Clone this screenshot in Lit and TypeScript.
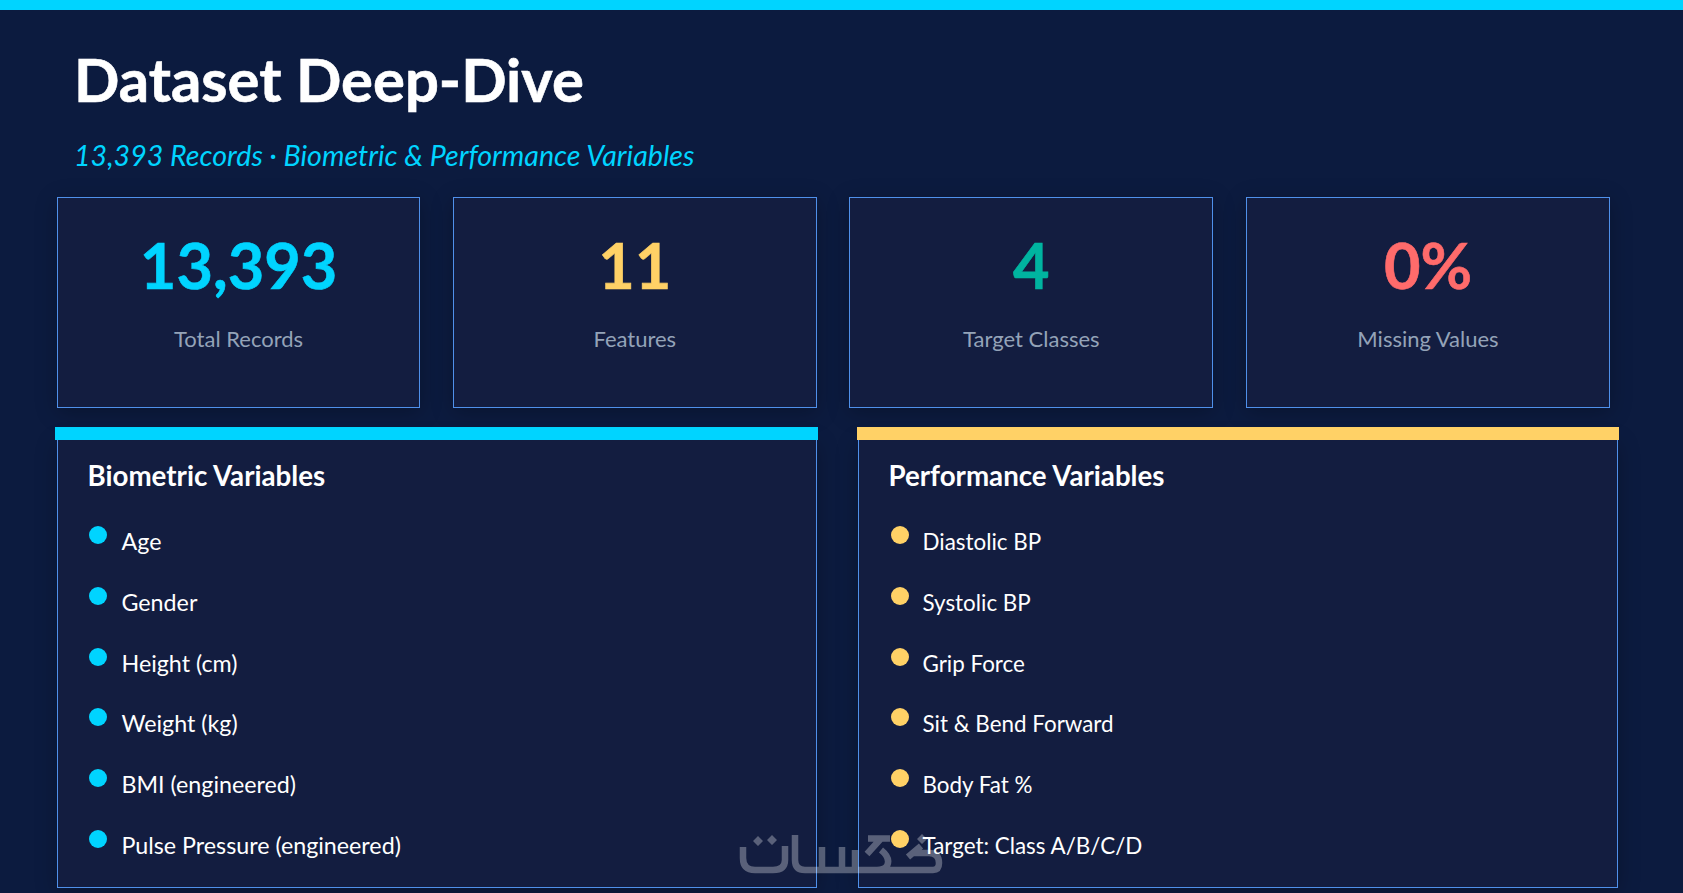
import { LitElement, html, css } from "lit";
import { customElement } from "lit/decorators.js";

const stats = [
  { v: "13,393", l: "Total Records", c: "#00d4ff" },
  { v: "11", l: "Features", c: "#ffd166" },
  { v: "4", l: "Target Classes", c: "#00b4a0" },
  { v: "0%", l: "Missing Values", c: "#ff6b6b" },
];
const panels = [
  { t: "Biometric Variables", c: "#00d4ff", items: ["Age", "Gender", "Height (cm)", "Weight (kg)", "BMI (engineered)", "Pulse Pressure (engineered)"] },
  { t: "Performance Variables", c: "#ffd166", items: ["Diastolic BP", "Systolic BP", "Grip Force", "Sit & Bend Forward", "Body Fat %", "Target: Class A/B/C/D"] },
];

@customElement("app-root")
export class AppRoot extends LitElement {
  static styles = css`
    :host { display: block; height: 893px; overflow: hidden; position: relative; background: #0c1b3f; font-family: Lato, "Open Sans", sans-serif; color: #fff; }
    .topbar { height: 10px; background: #00d4ff; }
    .content { padding: 0 65px 0 57px; }
    h1 { margin: 0; padding: 34px 0 0 17px; font-size: 59.8px; line-height: 70px; font-weight: 700; -webkit-text-stroke: 0.6px #fff; }
    .sub { padding: 25px 0 0 17px; font-size: 28.6px; line-height: 32px; font-style: italic; color: #00d4ff; }
    .stats { display: grid; grid-template-columns: 363.2px 364px 364px 364px; column-gap: 32.6px; margin-top: 26px; }
    .card { height: 211px; box-sizing: border-box; border: 1px solid #4f90ea; background: #131d40; box-shadow: 0 4px 20px rgba(0,0,0,.25); text-align: center; padding-top: 31px; }
    .num { font-size: 63px; line-height: 72px; font-weight: 700; -webkit-text-stroke: 0.6px currentColor; }
    .lab { font-size: 22px; line-height: 26px; margin-top: 25px; color: #94a3b8; }
    .panels { display: grid; grid-template-columns: 760px 760px; column-gap: 41px; margin-top: 32px; }
    .panel { position: relative; height: 448px; box-sizing: border-box; border: 1px solid #4f90ea; border-top: 0; background: #131d40; box-shadow: 0 4px 20px rgba(0,0,0,.25); padding: 20px 0 0 29.5px; }
    .bar { position: absolute; left: -2px; right: -2px; top: -13px; height: 13px; }
    .panel:first-child .bar { right: -2px; left: -3px; }
    .panel:first-child .dot { margin-left: -1px; margin-right: 15px; }
    .panel:last-child li { font-size: 22.4px; }
    .panel:last-child .txt { margin-top: 7px; }
    h2 { margin: 0; font-size: 27.7px; line-height: 32px; font-weight: 700; }
    ul { list-style: none; margin: 28px 0 0; padding: 0; display: flex; flex-direction: column; }
    li { display: flex; height: 60.8px; font-size: 23.25px; line-height: 30px; padding-left: 2px; position: relative; z-index: 2; }
    .dot { width: 18px; height: 18px; border-radius: 50%; flex: none; margin: 6px 14px 0 0; }
    .txt { margin-top: 6px; }
    .mark { position: absolute; left: 735px; top: 830px; width: 215px; height: 50px; opacity: .3; z-index: 1; }
  `;
  render() {
    return html`
      <div class="topbar"></div>
      <div class="content">
        <h1>Dataset Deep-Dive</h1>
        <div class="sub">13,393 Records · Biometric &amp; Performance Variables</div>
        <div class="stats">
          ${stats.map((s) => html`<div class="card"><div class="num" style="color:${s.c}">${s.v}</div><div class="lab">${s.l}</div></div>`)}
        </div>
        <div class="panels">
          ${panels.map((p) => html`<div class="panel">
            <div class="bar" style="background:${p.c}"></div>
            <h2>${p.t}</h2>
            <ul>${p.items.map((i) => html`<li><span class="dot" style="background:${p.c}"></span><span class="txt">${i}</span></li>`)}</ul>
          </div>`)}
        </div>
      </div>
      <svg class="mark" viewBox="0 0 215 50" fill="none" stroke="#fff" stroke-width="6.5">
        <path d="M8 17V28Q8 40 20 40H38Q50 40 50 30V16M60 5V30Q60 40 70 40H198Q204 40 204 33Q204 23 194 23H178M173 27L186 16M87 17V40M107 17V40M120 20V40M155 8.5H133M146 8.5L132 24M146 20Q156 28 152 36Q149 40 142 40" />
        <path d="M23 6l5 5-5 5-5-5zM37 5l5 5-5 5-5-5zM187 4l5 5-5 5-5-5z" fill="#fff" stroke="none" />
      </svg>
    `;
  }
}
